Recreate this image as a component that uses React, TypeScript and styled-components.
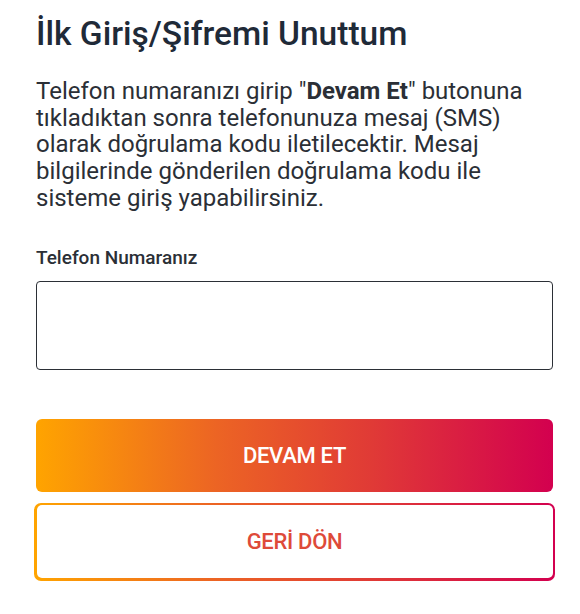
import React from "react";
import styled, { createGlobalStyle } from "styled-components";

const GlobalStyle = createGlobalStyle`
  html, body { margin: 0; padding: 0; background: #ffffff; }
  body { font-family: Roboto, "Liberation Sans", Arial, sans-serif; }
  * { box-sizing: border-box; }
`;

const GRADIENT = "linear-gradient(90deg, #ffa400 0%, #ec6424 35%, #e03a36 65%, #d3004f 100%)";

const Page = styled.main`
  width: 580px;
  padding: 14px 28px 0 36px;
  display: flex;
  flex-direction: column;
`;

const Title = styled.h1`
  margin: 0;
  font-family: Roboto, sans-serif;
  font-weight: 500;
  font-size: 33.5px;
  line-height: 40px;
  color: #1f2a38;
`;

const Intro = styled.p`
  margin: 24px 0 0;
  font-family: Roboto, sans-serif;
  font-weight: 400;
  font-size: 24px;
  line-height: 26.7px;
  color: #2b2f36;

  strong { font-weight: 700; }
`;

const Field = styled.label`
  margin-top: 36px;
  display: flex;
  flex-direction: column;
  gap: 13px;
`;

const FieldLabel = styled.span`
  font-family: Roboto, sans-serif;
  font-weight: 500;
  font-size: 19px;
  line-height: 20px;
  color: #2b2f36;
`;

const Input = styled.input`
  width: 517px;
  height: 89px;
  border: 1px solid #2b2f36;
  border-radius: 4px;
  padding: 0 16px;
  font-family: Roboto, sans-serif;
  font-size: 20px;
  color: #2b2f36;
  outline: none;
  background: #fff;
`;

const Actions = styled.div`
  margin-top: 49px;
  display: flex;
  flex-direction: column;
  gap: 11px;
`;

const PrimaryButton = styled.button`
  width: 517px;
  height: 73px;
  border: 0;
  border-radius: 6px;
  background: ${GRADIENT};
  color: #ffffff;
  font-family: Roboto, sans-serif;
  font-weight: 500;
  font-size: 22px;
  letter-spacing: -0.3px;
  text-transform: uppercase;
  cursor: pointer;
`;

const OutlineFrame = styled.div`
  margin-left: -2px;
  width: 521px;
  height: 78px;
  padding: 2.5px;
  border-radius: 7px;
  background: ${GRADIENT};
  display: flex;
`;

const SecondaryButton = styled.button`
  flex: 1;
  border: 0;
  border-radius: 5px;
  background: #ffffff;
  color: #de4a39;
  font-family: Roboto, sans-serif;
  font-weight: 500;
  font-size: 22px;
  letter-spacing: -0.3px;
  cursor: pointer;
`;

export default function App() {
  return (
    <>
      <GlobalStyle />
      <Page>
        <Title>İlk Giriş/Şifremi Unuttum</Title>
        <Intro>
          Telefon numaranızı girip "<strong>Devam Et</strong>" butonuna tıkladıktan sonra
          telefonunuza mesaj (SMS) olarak doğrulama kodu iletilecektir. Mesaj bilgilerinde
          gönderilen doğrulama kodu ile sisteme giriş yapabilirsiniz.
        </Intro>
        <Field>
          <FieldLabel>Telefon Numaranız</FieldLabel>
          <Input type="tel" />
        </Field>
        <Actions>
          <PrimaryButton>DEVAM ET</PrimaryButton>
          <OutlineFrame>
            <SecondaryButton>GERİ DÖN</SecondaryButton>
          </OutlineFrame>
        </Actions>
      </Page>
    </>
  );
}
